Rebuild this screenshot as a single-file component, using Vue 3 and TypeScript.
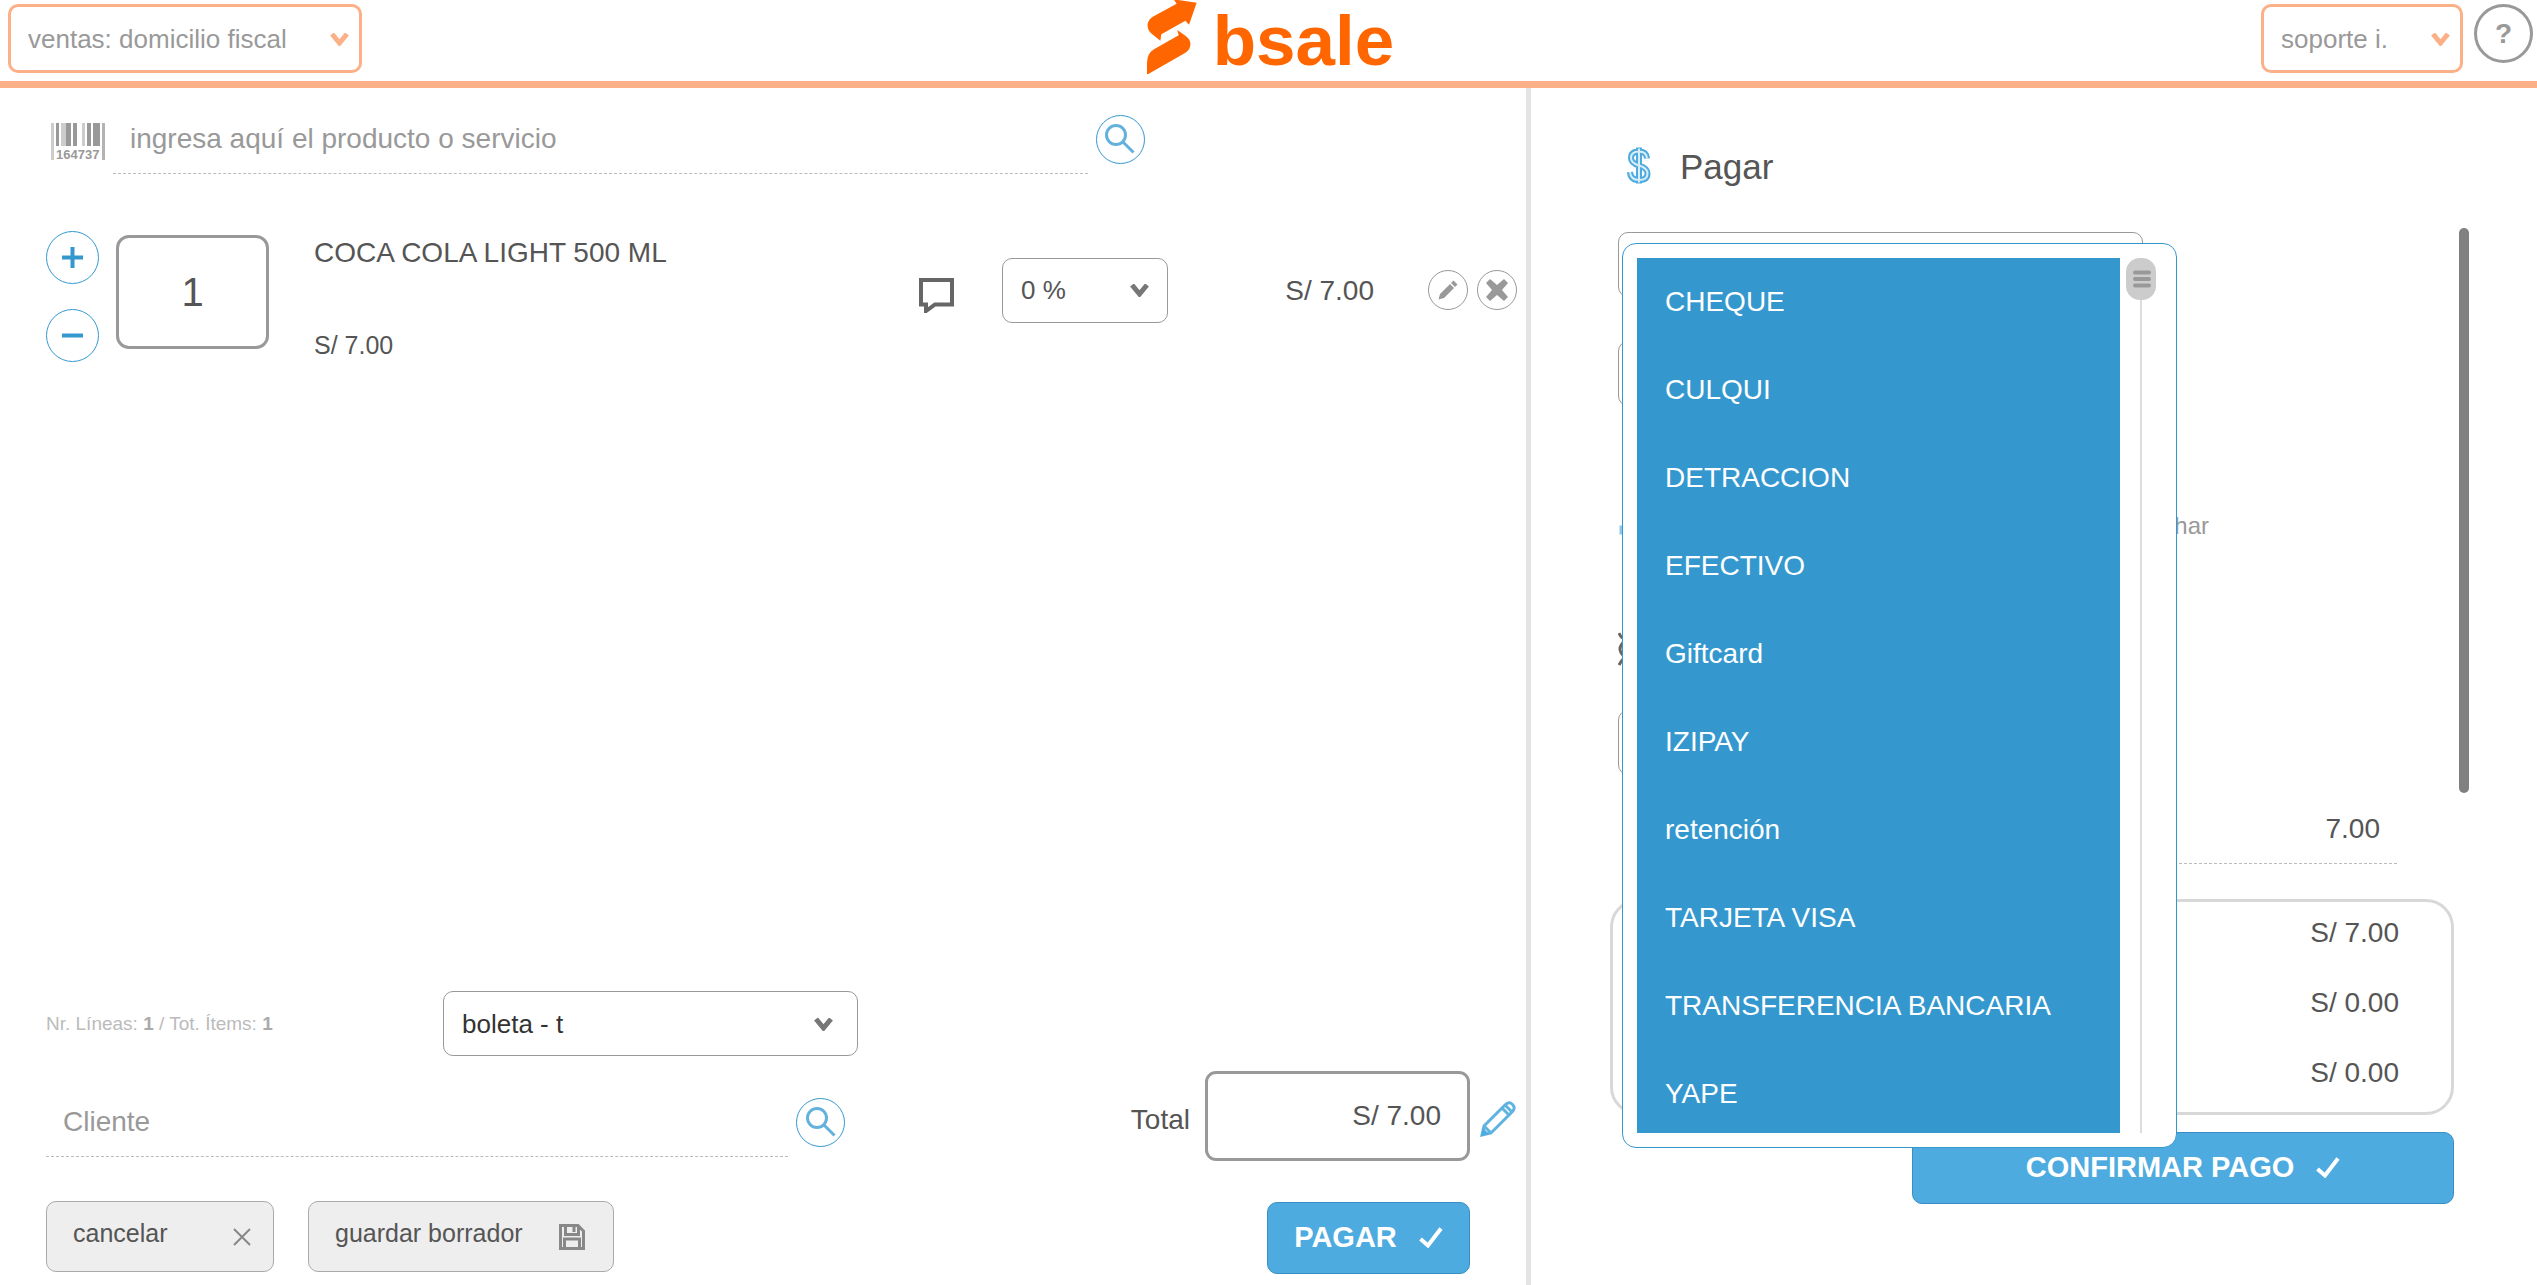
<script setup lang="ts">
import { ref } from 'vue'

interface SaleLine {
  id: number
  name: string
  unitPrice: string
  discount: string
  total: string
}

const paymentMethods: string[] = [
  'CHEQUE',
  'CULQUI',
  'DETRACCION',
  'EFECTIVO',
  'Giftcard',
  'IZIPAY',
  'retención',
  'TARJETA VISA',
  'TRANSFERENCIA BANCARIA',
  'YAPE',
]

const lines: SaleLine[] = [
  { id: 1, name: 'COCA COLA LIGHT 500 ML', unitPrice: 'S/ 7.00', discount: '0 %', total: 'S/ 7.00' },
]

const summary = [
  { label: 'Total', amount: 'S/ 7.00' },
  { label: 'Pendiente', amount: 'S/ 0.00' },
  { label: 'Vuelto', amount: 'S/ 0.00' },
]

const quantity = ref('1')
const product = ref('')
const client = ref('')
const total = ref('S/ 7.00')
const amount = ref('7.00')
</script>

<template>
  <div class="page">
    <header class="topbar">
      <div class="select-wrap branch">
        <select class="select accent" aria-label="Sucursal">
          <option>ventas: domicilio fiscal</option>
        </select>
        <svg class="chevron" viewBox="0 0 19 13"><path d="M2 1 L9.500 10 L17 1" /></svg>
      </div>

      <a class="logo" href="#" aria-label="bsale">
        <svg class="logo-mark" viewBox="81 0 150 222">
          <path d="M161 -2 L230 8 L207 74 L196 62 L124 103 L121 122 L96 102 Q81 90 83 72 Q86 57 101 49 L170 11 Z" />
          <path d="M172 90 L197 108 Q213 119 211 136 Q209 151 195 159 L85 222 L81 222 L81 188 Q82 160 102 148 L176 106 Z" />
        </svg>
        <span class="logo-text">bsale</span>
      </a>

      <div class="account">
        <div class="select-wrap user">
          <select class="select accent" aria-label="Usuario">
            <option>soporte i.</option>
          </select>
          <svg class="chevron" viewBox="0 0 19 13"><path d="M2 1 L9.500 10 L17 1" /></svg>
        </div>
        <button class="help" type="button" aria-label="Ayuda">?</button>
      </div>
    </header>

    <main class="columns">
      <section class="sale">
        <div class="product-search">
          <svg class="barcode" viewBox="0 0 54 42" aria-hidden="true">
            <g fill="#999">
              <rect x="5" y="0" width="3" height="23" />
              <rect x="15" y="0" width="5" height="23" />
              <rect x="22" y="0" width="4" height="23" />
              <rect x="36" y="0" width="4" height="23" />
              <rect x="42" y="0" width="7" height="23" />
            </g>
            <g fill="#ccc">
              <rect x="0" y="0" width="3" height="37" />
              <rect x="10" y="0" width="5" height="23" />
              <rect x="31" y="0" width="3" height="23" />
            </g>
            <rect x="51" y="0" width="3" height="37" fill="#b4b4b4" />
            <text x="5" y="36">164737</text>
          </svg>
          <input v-model="product" class="line-input product" type="text" aria-label="Producto" placeholder="ingresa aquí el producto o servicio" />
          <button class="round search" type="button" aria-label="Buscar producto">
            <svg viewBox="0 0 30 30"><circle cx="11" cy="11" r="9.500" /><path d="M18 18 L28.500 28.500" /></svg>
          </button>
        </div>

        <article v-for="line in lines" :key="line.id" class="item">
          <div class="steps">
            <button class="round step" type="button" aria-label="Aumentar">
              <svg viewBox="0 0 21 21"><path d="M0 10.500 H21 M10.500 0 V21" /></svg>
            </button>
            <button class="round step" type="button" aria-label="Disminuir">
              <svg viewBox="0 0 21 21"><path d="M0 10.500 H21" /></svg>
            </button>
          </div>
          <input v-model="quantity" class="quantity" type="text" aria-label="Cantidad" />
          <div class="description">
            <span class="item-name">{{ line.name }}</span>
            <span class="item-unit">{{ line.unitPrice }}</span>
          </div>
          <div class="item-tools">
            <button class="comment" type="button" aria-label="Comentario">
              <svg viewBox="0 0 35 35"><path d="M2 2 H33 V26.500 H16 L7 33 V26.500 H2 Z" /></svg>
            </button>
            <div class="select-wrap discount">
              <select class="select" aria-label="Descuento">
                <option>{{ line.discount }}</option>
              </select>
              <svg class="chevron" viewBox="0 0 19 13"><path d="M2 1 L9.500 10 L17 1" /></svg>
            </div>
            <span class="item-total">{{ line.total }}</span>
            <div class="item-actions">
              <button class="round small" type="button" aria-label="Editar">
                <svg viewBox="0 0 20 20"><path d="M0.500 19.500 L2 14 L12 4 L16 8 L6 18 Z M13 3 L15.500 0.500 L19.500 4.500 L17 7 Z" /></svg>
              </button>
              <button class="round small" type="button" aria-label="Eliminar">
                <svg class="cross" viewBox="0 0 24 24"><path d="M5 1 L12 7 L19 1 L23 5 L17 12 L23 19 L19 23 L12 17 L5 23 L1 19 L7 12 L1 5 Z" /></svg>
              </button>
            </div>
          </div>
        </article>

        <footer class="sale-footer">
          <div class="document">
            <div class="document-row">
              <p class="counter">Nr. Líneas: <b>1</b> / Tot. Ítems: <b>1</b></p>
              <div class="select-wrap doc-type">
                <select class="select dark" aria-label="Tipo de documento">
                  <option>boleta - t</option>
                </select>
                <svg class="chevron" viewBox="0 0 19 13"><path d="M2 1 L9.500 10 L17 1" /></svg>
              </div>
            </div>
            <div class="client-row">
              <input v-model="client" class="line-input client" type="text" aria-label="Cliente" placeholder="Cliente" />
              <button class="round search" type="button" aria-label="Buscar cliente">
                <svg viewBox="0 0 30 30"><circle cx="11" cy="11" r="9.500" /><path d="M18 18 L28.500 28.500" /></svg>
              </button>
            </div>
            <div class="button-row">
              <button class="plain cancel" type="button">
                <span>cancelar</span>
                <svg class="icon-x" viewBox="0 0 18 18"><path d="M1 1 L17 17 M17 1 L1 17" /></svg>
              </button>
              <button class="plain draft" type="button">
                <span>guardar borrador</span>
                <svg class="icon-disk" viewBox="0 0 26 26">
                  <path d="M1.500 1.500 H19 L24.500 7 V24.500 H1.500 Z M6.500 2 V10.500 H19.500 V2 M5.500 24 V15 H20.500 V24 M15 3 V8" />
                </svg>
              </button>
            </div>
          </div>

          <div class="checkout">
            <div class="total-row">
              <label class="total-label" for="total">Total</label>
              <input id="total" v-model="total" class="total-box" type="text" />
              <button class="edit-total" type="button" aria-label="Editar total">
                <svg viewBox="0 0 36 36">
                  <path d="M2 34 L4 25 L25 4 Q29 0 32.500 3.500 Q36 7 32 11 L11 32 Z" />
                  <path d="M22 7 L29 14 M25 4 L32 11 M4 25 L11 32" />
                  <path class="tip" d="M1 35 L3 27 L9 33 Z" />
                </svg>
              </button>
            </div>
            <button class="primary pay" type="button">
              <span>PAGAR</span>
              <svg viewBox="0 0 24 21"><path d="M1.500 12 L9 18.500 L22 1.500" /></svg>
            </button>
          </div>
        </footer>
      </section>

      <section class="payment">
        <h1 class="heading">
          <svg viewBox="0 0 24 39" aria-hidden="true">
            <path class="outer" d="M20 12.500 Q19.500 5.500 12 5.500 Q4 5.500 4 12 Q4 17 12 19.500 Q20.500 22 20.500 27.500 Q20.500 34 12 34 Q3.500 34 3 26 M12 1.500 V37.500" />
            <path class="inner" d="M20 12.500 Q19.500 5.500 12 5.500 Q4 5.500 4 12 Q4 17 12 19.500 Q20.500 22 20.500 27.500 Q20.500 34 12 34 Q3.500 34 3 26 M12 2.500 V36.500" />
          </svg>
          <span>Pagar</span>
        </h1>

        <div class="scroller">
          <div class="fields">
            <div class="select-wrap field first">
              <select class="select" aria-label="Forma de pago">
                <option></option>
              </select>
              <div class="menu">
                <ul class="options" role="listbox" aria-label="Formas de pago">
                  <li v-for="method in paymentMethods" :key="method" class="option" role="option" aria-selected="false">{{ method }}</li>
                </ul>
                <div class="track">
                  <svg class="handle" viewBox="0 0 30 42">
                    <rect width="30" height="42" rx="14" fill="#ccc" />
                    <path d="M9 14.500 H23 M9 21 H23 M9 27.500 H23" />
                  </svg>
                </div>
              </div>
            </div>
            <div class="select-wrap field">
              <select class="select" aria-label="Detalle de pago">
                <option></option>
              </select>
            </div>
            <div class="dispatch">
              <svg class="dispatch-icon" viewBox="0 0 34 34"><rect x="3" y="18" width="28" height="6" /></svg>
              <span>despachar</span>
            </div>
            <svg class="extra-icon" viewBox="0 0 34 34"><path d="M1 1 Q3 6 7 7 M7 9 Q-3 17 7 25 M7 25 Q3 29 1 33" /></svg>
            <div class="select-wrap field">
              <select class="select" aria-label="Vendedor">
                <option></option>
              </select>
            </div>
          </div>
          <div class="thumb"></div>
        </div>

        <input v-model="amount" class="line-input amount" type="text" aria-label="Monto" />

        <div class="summary">
          <output v-for="row in summary" :key="row.label" class="summary-row" :aria-label="row.label">{{ row.amount }}</output>
        </div>

        <button class="primary confirm" type="button">
          <span>CONFIRMAR PAGO</span>
          <svg viewBox="0 0 24 21"><path d="M1.500 12 L9 18.500 L22 1.500" /></svg>
        </button>
      </section>
    </main>
  </div>
</template>

<style>
body {
  margin: 0;
  background: #fff;
}
</style>

<style scoped>
.page {
  display: flex;
  flex-direction: column;
  min-height: 100vh;
  color: #555;
  font-family: "Liberation Sans", Arial, sans-serif;
  font-size: 28px;
  line-height: 32px;
}

.page * {
  box-sizing: border-box;
}

button,
input,
select {
  margin: 0;
  padding: 0;
  font-family: inherit;
  color: inherit;
}

button {
  flex: none;
  cursor: pointer;
}

svg {
  display: block;
  flex: none;
  fill: none;
}

/* top bar */
.topbar {
  display: grid;
  grid-template-columns: 1fr auto 1fr;
  height: 88px;
  padding: 0 4px 0 8px;
  border-bottom: 7px solid #fbb088;
}

.select-wrap {
  position: relative;
  height: 65px;
}

.select {
  width: 100%;
  height: 100%;
  padding: 0 18px;
  appearance: none;
  border: 1px solid #999;
  border-radius: 10px;
  background: #fff;
  font-size: 26px;
  outline: none;
}

.select.dark {
  color: #333;
}

.select.accent {
  padding: 0 17px;
  border: 3px solid #fbb088;
  color: #999;
}

.chevron {
  position: absolute;
  top: 50%;
  right: 19px;
  width: 19px;
  height: 13px;
  margin-top: -6px;
  stroke: #777;
  stroke-width: 5;
  pointer-events: none;
}

.accent + .chevron {
  right: 13px;
  stroke: #fbb088;
}

.branch {
  width: 354px;
  height: 69px;
  margin-top: 4px;
}

.user {
  width: 202px;
  height: 69px;
}

.account {
  display: flex;
  justify-content: flex-end;
  align-items: flex-start;
  gap: 11px;
  padding-top: 4px;
}

.help {
  width: 59px;
  height: 59px;
  border: 3px solid #999;
  border-radius: 50%;
  background: #fff;
  color: #999;
  font-size: 28px;
  font-weight: bold;
}

.logo {
  display: flex;
  align-items: flex-start;
  gap: 16px;
  color: #f60;
  text-decoration: none;
}

.logo-mark {
  width: 50px;
  height: 74px;
  fill: #f60;
}

.logo-text {
  font-size: 71px;
  font-weight: bold;
  line-height: 81px;
}

/* columns */
.columns {
  flex: 1;
  display: grid;
  grid-template-columns: minmax(0, 1531fr) minmax(0, 1006fr);
}

.sale {
  display: flex;
  flex-direction: column;
  padding-top: 16px;
  border-right: 5px solid #e2e4e6;
}

.line-input {
  flex: 1;
  min-width: 0;
  height: 70px;
  border: 0;
  border-bottom: 1px dashed #bbb;
  background: transparent;
  font-size: 28px;
  outline: none;
}

.line-input::placeholder {
  color: #999;
  opacity: 1;
}

.product-search {
  display: flex;
  align-items: center;
  gap: 8px;
  width: 75%;
  padding-left: 51px;
}

.barcode {
  width: 54px;
  height: 42px;
  margin-top: 10px;
}

.barcode text {
  fill: #999;
  font-family: "Liberation Sans", Arial, sans-serif;
  font-size: 13px;
  font-weight: bold;
}

.product {
  padding-left: 17px;
}

.round {
  display: flex;
  align-items: center;
  justify-content: center;
  border: 1px solid #3498cf;
  border-radius: 50%;
  background: #fff;
}

.search {
  width: 49px;
  height: 49px;
}

.search svg {
  width: 30px;
  height: 30px;
  stroke: #62b2dd;
  stroke-width: 3;
}

/* sale line */
.item {
  display: flex;
  height: 131px;
  margin-top: 57px;
  padding: 0 9px 0 46px;
}

.steps {
  display: flex;
  flex-direction: column;
  justify-content: space-between;
}

.step {
  width: 53px;
  height: 53px;
}

.step svg {
  width: 21px;
  height: 21px;
  stroke: #3498cf;
  stroke-width: 4;
}

.quantity {
  width: 153px;
  height: 114px;
  margin: 4px 45px 0 17px;
  border: 3px solid #999;
  border-radius: 13px;
  font-size: 40px;
  text-align: center;
}

.description {
  flex: 1;
  min-width: 0;
  display: flex;
  flex-direction: column;
  justify-content: space-between;
  padding: 6px 0 1px;
}

.item-unit {
  font-size: 25px;
}

.item-tools {
  display: flex;
  align-items: center;
  height: 118px;
}

.comment {
  display: flex;
  align-items: flex-end;
  width: 35px;
  height: 46px;
  margin-right: 48px;
  border: 0;
  background: none;
}

.comment svg {
  width: 35px;
  height: 35px;
  stroke: #666;
  stroke-width: 4;
}

.discount {
  width: 166px;
}

.item-total {
  width: 206px;
  padding-top: 2px;
  text-align: right;
}

.item-actions {
  display: flex;
  gap: 9px;
  margin-left: 54px;
}

.small {
  width: 40px;
  height: 40px;
  border-color: #999;
}

.small svg {
  width: 20px;
  height: 20px;
  fill: #999;
}

.small .cross {
  width: 24px;
  height: 24px;
}

/* sale footer */
.sale-footer {
  display: flex;
  justify-content: space-between;
  align-items: flex-end;
  margin-top: auto;
  padding: 0 10px 11px 46px;
}

.document {
  flex: 0 1 812px;
  padding-bottom: 2px;
}

.document-row {
  display: flex;
  justify-content: space-between;
  align-items: center;
}

.counter {
  margin: 0;
  color: #bbb;
  font-size: 19px;
}

.counter b {
  color: #aaa;
}

.doc-type {
  width: 415px;
}

.doc-type .chevron {
  right: 25px;
}

.client-row {
  display: flex;
  align-items: center;
  gap: 8px;
  margin-top: 31px;
  padding-right: 13px;
}

.client {
  padding-left: 17px;
}

.button-row {
  display: flex;
  gap: 34px;
  margin-top: 44px;
}

.plain {
  display: flex;
  align-items: center;
  justify-content: space-between;
  height: 71px;
  padding: 0 22px 0 26px;
  border: 1px solid #aaa;
  border-radius: 10px;
  background: #eee;
  font-size: 25px;
}

.plain span {
  padding-bottom: 6px;
}

.plain svg {
  stroke: #888;
  stroke-width: 2;
}

.cancel {
  width: 228px;
}

.draft {
  width: 306px;
  padding-right: 28px;
}

.icon-x {
  width: 18px;
  height: 18px;
}

.plain .icon-disk {
  width: 26px;
  height: 26px;
  stroke-width: 3;
}

.checkout {
  display: flex;
  flex-direction: column;
  align-items: flex-end;
  gap: 41px;
}

.total-row {
  display: flex;
  align-items: center;
}

.total-label {
  padding-top: 8px;
}

.total-box {
  width: 265px;
  height: 90px;
  margin: 0 10px 0 15px;
  padding-right: 26px;
  border: 3px solid #999;
  border-radius: 11px;
  font-size: 28px;
  text-align: right;
}

.edit-total {
  padding-top: 6px;
  border: 0;
  background: none;
}

.edit-total svg {
  width: 36px;
  height: 36px;
  stroke: #5fb3e0;
  stroke-width: 3;
}

.edit-total .tip {
  fill: #4dabe0;
  stroke: none;
}

.primary {
  display: flex;
  align-items: center;
  justify-content: center;
  gap: 22px;
  height: 72px;
  padding-bottom: 2px;
  border: 1px solid #3b8dc4;
  border-radius: 10px;
  background: #4dabe0;
  color: #fff;
  font-size: 29px;
  font-weight: bold;
}

.primary svg {
  width: 24px;
  height: 21px;
  stroke: #fff;
  stroke-width: 4;
}

.pay {
  width: 203px;
  margin-right: 46px;
}

/* payment panel */
.payment {
  display: flex;
  flex-direction: column;
  padding: 53px 68px 0 79px;
}

.heading {
  display: flex;
  align-items: center;
  gap: 29px;
  height: 48px;
  margin: 0;
  padding-left: 17px;
  font-size: 35px;
  font-weight: normal;
}

.heading span {
  padding-top: 4px;
}

.heading svg {
  width: 24px;
  height: 39px;
}

.heading .outer {
  stroke: #4dabe0;
  stroke-width: 6;
}

.heading .inner {
  stroke: #d8edf8;
  stroke-width: 2;
}

.scroller {
  display: flex;
  justify-content: space-between;
  margin-top: 39px;
  padding-left: 8px;
}

.fields {
  width: 591px;
  padding: 4px 0 18px;
}

.field {
  width: 525px;
}

.first {
  margin-bottom: 44px;
}

.thumb {
  width: 10px;
  border-radius: 5px;
  background: #808080;
}

.menu {
  position: absolute;
  z-index: 2;
  top: 11px;
  left: 4px;
  display: flex;
  gap: 6px;
  width: 555px;
  padding: 14px;
  border: 1px solid #3498cf;
  border-radius: 14px;
  background: #fff;
}

.options {
  width: 483px;
  height: 875px;
  margin: 0;
  padding: 0;
  overflow: hidden;
  background: #3498cf;
  list-style: none;
}

.option {
  height: 88px;
  padding-left: 28px;
  color: #fff;
  line-height: 88px;
}

.track {
  width: 30px;
  background: linear-gradient(#ddd, #ddd) center / 2px 100% no-repeat;
}

.handle {
  width: 30px;
  height: 42px;
  stroke-linecap: round;
}

.handle path {
  stroke: #999;
  stroke-width: 4;
}

.dispatch {
  display: flex;
  align-items: center;
  justify-content: space-between;
  height: 34px;
  margin-top: 103px;
  color: #999;
  font-size: 24px;
}

.dispatch-icon {
  width: 34px;
  height: 34px;
  stroke: #8cc8e8;
  stroke-width: 3;
}

.extra-icon {
  width: 34px;
  height: 34px;
  margin: 89px 0 44px;
  stroke: #666;
  stroke-width: 3;
}

.amount {
  flex: none;
  margin: 1px 72px 0 24px;
  padding-right: 17px;
  text-align: right;
}

.summary {
  margin: 35px 15px 0 0;
  border: 3px solid #d8d8d8;
  border-radius: 28px;
}

.summary-row {
  display: flex;
  align-items: center;
  justify-content: flex-end;
  height: 70px;
  padding: 0 52px 9px 0;
}

.confirm {
  align-self: flex-end;
  width: 542px;
  margin: 17px 15px 0 0;
}
</style>
